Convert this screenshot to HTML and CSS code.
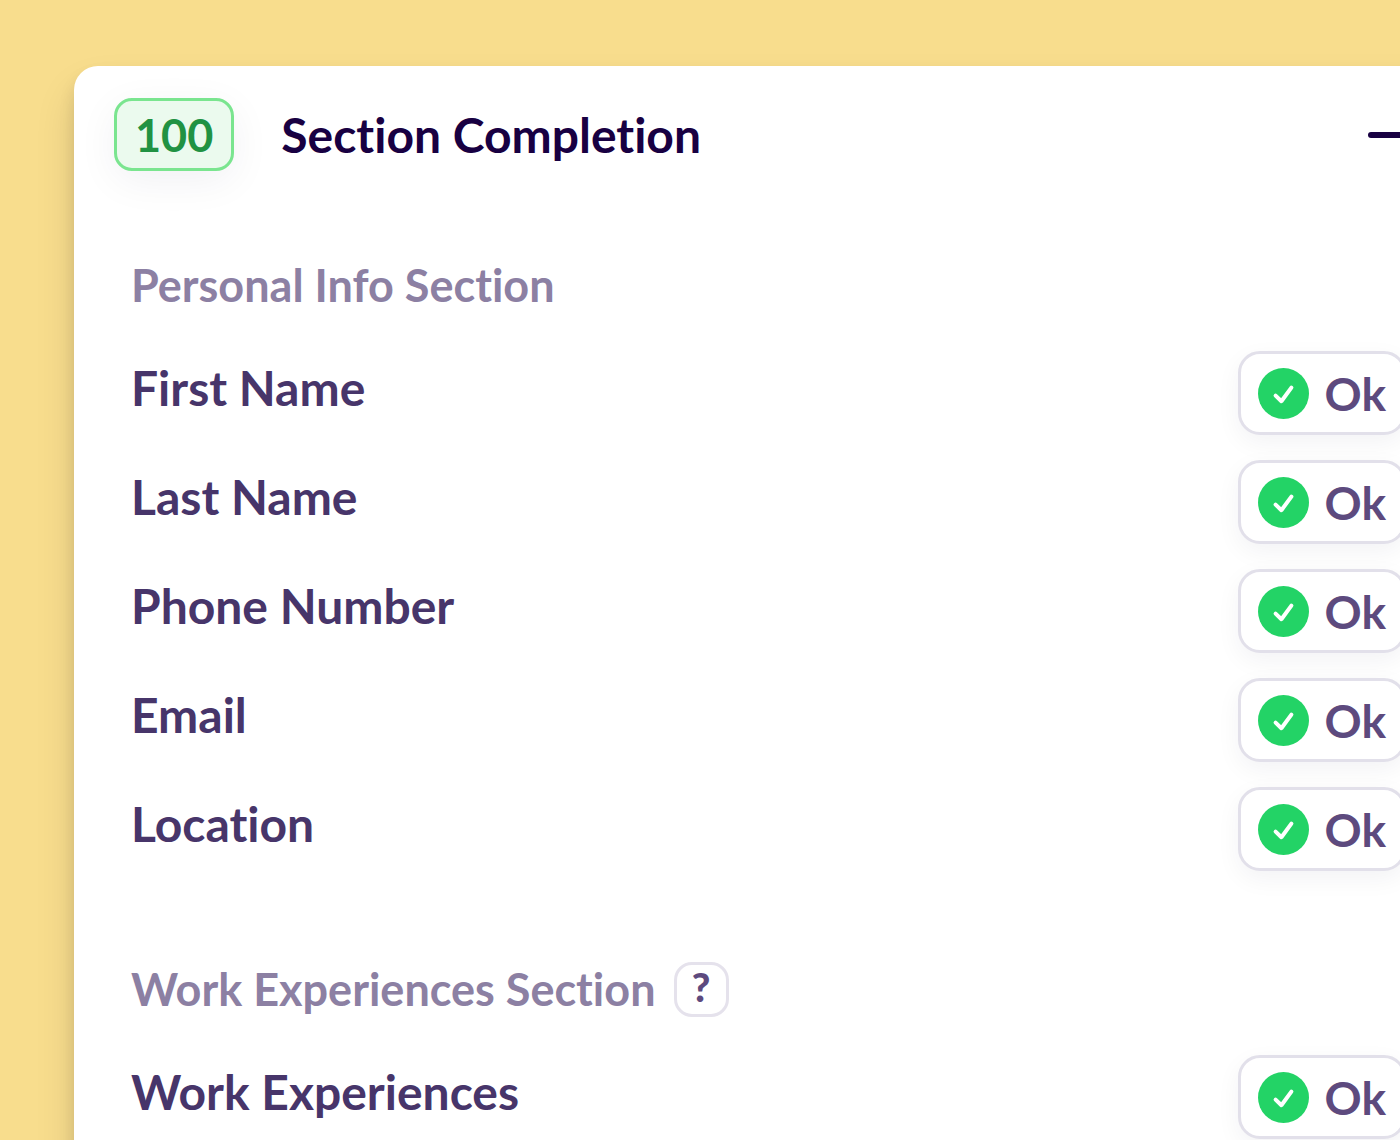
FILE: index.html
```html
<!DOCTYPE html>
<html lang="en">
<head>
    <meta charset="UTF-8">
    <meta name="viewport" content="width=device-width, initial-scale=1.0">
    <title>Section Completion</title>
    <link rel="stylesheet" href="styles.css">
</head>
<body>
    <svg class="sprite" aria-hidden="true">
        <symbol id="check" viewBox="0 0 51 51">
            <circle cx="25.5" cy="25.5" r="25.5" fill="#23d366"/>
            <path d="M17.6 27.6 L23.4 33.2 L33.4 19.6" fill="none" stroke="#fff" stroke-width="4" stroke-linecap="round" stroke-linejoin="round"/>
        </symbol>
    </svg>

    <main class="card">
        <header class="card-header">
            <span class="score">100</span>
            <h1 class="card-title">Section Completion</h1>
            <button type="button" class="collapse-btn" aria-label="Collapse"><span class="minus"></span></button>
        </header>

        <section class="group">
            <h2 class="group-title">Personal Info Section</h2>
            <ul class="checks">
                <li class="check-row">
                    <span class="check-name">First Name</span>
                    <span class="status"><svg class="status-icon"><use href="#check"/></svg>Ok</span>
                </li>
                <li class="check-row">
                    <span class="check-name">Last Name</span>
                    <span class="status"><svg class="status-icon"><use href="#check"/></svg>Ok</span>
                </li>
                <li class="check-row">
                    <span class="check-name">Phone Number</span>
                    <span class="status"><svg class="status-icon"><use href="#check"/></svg>Ok</span>
                </li>
                <li class="check-row">
                    <span class="check-name">Email</span>
                    <span class="status"><svg class="status-icon"><use href="#check"/></svg>Ok</span>
                </li>
                <li class="check-row">
                    <span class="check-name">Location</span>
                    <span class="status"><svg class="status-icon"><use href="#check"/></svg>Ok</span>
                </li>
            </ul>
        </section>

        <section class="group">
            <h2 class="group-title">Work Experiences Section <button type="button" class="help-btn">?</button></h2>
            <ul class="checks">
                <li class="check-row">
                    <span class="check-name">Work Experiences</span>
                    <span class="status"><svg class="status-icon"><use href="#check"/></svg>Ok</span>
                </li>
            </ul>
        </section>
    </main>
</body>
</html>
```
FILE: styles.css
```css
* {
    box-sizing: border-box;
}
body {
    margin: 0;
    height: 100vh;
    overflow: hidden;
    background-color: #f8dd8d;
    font-family: Lato, sans-serif;
    font-weight: 700;
    font-variant-ligatures: none;
}
.sprite {
    display: none;
}
/* the card runs off the right edge of the window */
.card {
    margin: 66px -64px 0 74px;
    padding: 32px 58px 58px 40px;
    min-height: 100vh;
    background-color: #fff;
    border-radius: 24px;
    box-shadow: 0 24px 40px rgba(0, 0, 0, 0.12), 0 10px 16px rgba(0, 0, 0, 0.1);
}
.card-header {
    display: flex;
    align-items: center;
}
.score {
    padding: 7px 18px 5px;
    border: 3px solid #7ae58f;
    border-radius: 18px;
    background-color: #ebfaee;
    box-shadow: 0 10px 40px rgba(24, 0, 66, 0.06);
    color: #219243;
    font-size: 45px;
    line-height: 55px;
}
.card-title {
    margin: 0 auto 0 47px;
    color: #180042;
    font-size: 48px;
    line-height: 60px;
}
.collapse-btn {
    padding: 16px 0;
    border: none;
    background: none;
    cursor: pointer;
}
.minus {
    display: block;
    width: 38px;
    height: 6px;
    border-radius: 3px;
    background-color: #180042;
}
.group {
    margin: 84px 0 0 17px;
}
.group + .group {
    margin-top: 88px;
}
.group-title {
    display: flex;
    align-items: center;
    gap: 18px;
    height: 60px;
    margin: 0;
    color: #8c80a3;
    font-size: 45px;
}
.help-btn {
    width: 55px;
    height: 55px;
    padding: 0 0 4px;
    border: 3px solid #e5e2ec;
    border-radius: 18px;
    background-color: #fff;
    color: #5d4a7e;
    font: inherit;
    font-size: 40px;
    font-weight: 900;
    line-height: 45px;
    cursor: pointer;
}
.checks {
    display: grid;
    gap: 25px;
    margin: 36px 0 0;
    padding: 0;
    list-style: none;
}
.check-row {
    display: flex;
    justify-content: space-between;
}
.check-name {
    padding-top: 7px;
    color: #47356a;
    font-size: 48px;
    line-height: 60px;
}
.status {
    display: flex;
    align-items: center;
    gap: 16px;
    height: 84px;
    padding: 0 17px;
    border: 3px solid #e2e0ea;
    border-radius: 22px;
    background-color: #fff;
    box-shadow: 0 8px 24px rgba(24, 0, 66, 0.05);
    color: #5d4a7e;
    font-size: 46px;
}
.status-icon {
    width: 51px;
    height: 51px;
}
```
